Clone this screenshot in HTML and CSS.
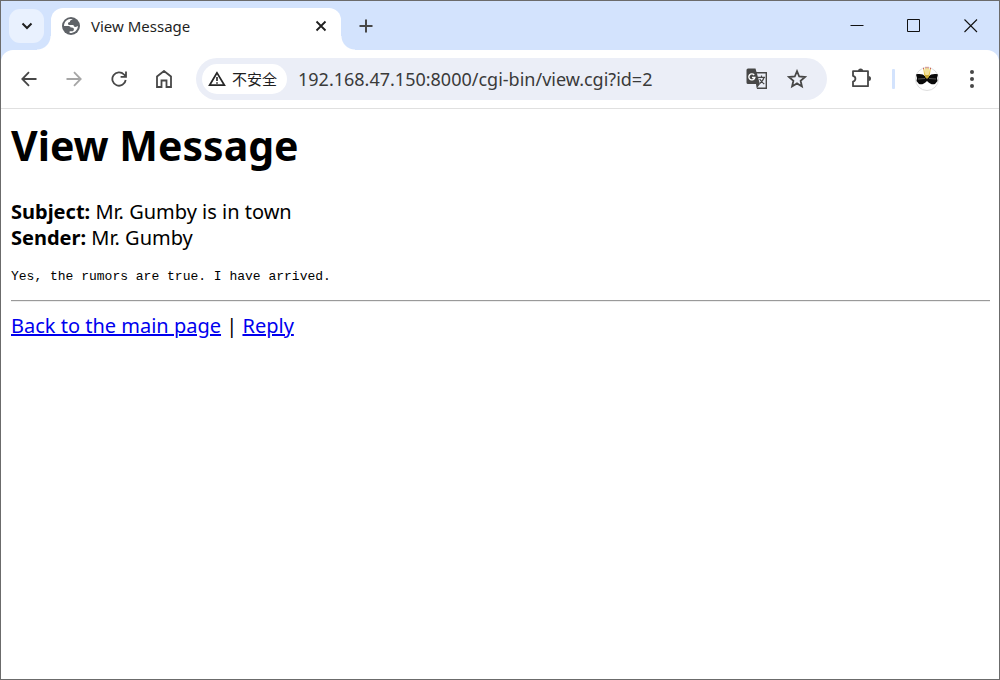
FILE: index.html
```html
<!DOCTYPE html>
<html lang="en">
<head>
<meta charset="utf-8">
<meta name="viewport" content="width=device-width, initial-scale=1">
<title>View Message</title>
<link rel="stylesheet" href="styles.css">
</head>
<body>
<div class="window">
  <header class="tab-strip">
    <button class="tab-search" aria-label="Search tabs">
      <svg width="12" height="8" viewBox="0 0 12 8"><path d="M1.500 1.500 6 6l4.500-4.500" fill="none" stroke="#1f1f1f" stroke-width="2"/></svg>
    </button>
    <div class="tab">
      <svg class="globe" width="18" height="18" viewBox="0 0 18 18"><circle cx="9" cy="9" r="9" fill="#5f6368"/><path d="M10.900 2.300C9 3.100 7.900 3.500 7.900 4.900 6.500 5 6 5.500 6 6.500s.7 1.500 1.800 1.500h3.700c0 1.300.8 1.900 2 1.900 1.100 0 1.900-.3 2.500-.8-.3 3.500-2.800 6.300-6.300 6.900-.7.100-1.400.1-2.100 0v-1.800h2.300c1.200 0 2-.7 2-1.800 0-1.200-.8-1.900-2-1.900H8.700c-.5-1-1.200-1.500-2.500-1.500H2c.1-3.700 2.500-6.400 6-7 1-.1 2 0 2.900.3z" fill="#fff"/></svg>
      <span class="tab-title">View Message</span>
      <button class="tab-close" aria-label="Close tab">
        <svg width="12" height="12" viewBox="0 0 12 12"><path d="m1.500 1.500 9 9m0-9-9 9" stroke="#1f1f1f" stroke-width="1.800"/></svg>
      </button>
    </div>
    <button class="new-tab" aria-label="New tab">
      <svg width="14" height="14" viewBox="0 0 14 14"><path d="M7 .5v13M.5 7h13" stroke="#474747" stroke-width="2"/></svg>
    </button>
    <div class="window-controls">
      <button aria-label="Minimize"><svg width="14" height="14" viewBox="0 0 14 14"><path d="M.5 6.500h13" stroke="#111"/></svg></button>
      <button aria-label="Maximize"><svg width="14" height="14" viewBox="0 0 14 14"><path d="M.5.500h12v12H.5z" fill="none" stroke="#111"/></svg></button>
      <button aria-label="Close"><svg width="14" height="14" viewBox="0 0 14 14"><path d="m.5.500 12.500 12.500m0-12.500L.5 13" stroke="#111" stroke-width="1.100"/></svg></button>
    </div>
  </header>

  <nav class="toolbar" aria-label="Browser">
    <div class="nav-buttons">
      <button aria-label="Back"><svg width="16" height="16" viewBox="0 0 16 16"><path d="M15.500 8H2M8 1.200 1.300 8 8 14.800" fill="none" stroke="#474747" stroke-width="1.800"/></svg></button>
      <button aria-label="Forward" disabled><svg width="16" height="16" viewBox="0 0 16 16"><path d="M.5 8H14M8 1.200 14.700 8 8 14.800" fill="none" stroke="#a6a6a6" stroke-width="1.800"/></svg></button>
      <button aria-label="Reload"><svg width="16" height="16" viewBox="0 0 16 16"><path d="M14.700 9A6.700 6.700 0 1 1 13 3.500l1.500 1.700M15 .5v5.400H9.600" fill="none" stroke="#474747" stroke-width="1.800"/></svg></button>
      <button aria-label="Home"><svg width="16" height="18" viewBox="0 0 16 18"><path d="M1 17V6.500L8 1l7 5.500V17h-4.500v-6.500h-5V17z" fill="none" stroke="#474747" stroke-width="1.800"/></svg></button>
    </div>
    <div class="address-bar">
      <button class="security" lang="zh-CN">
        <svg width="18" height="16" viewBox="0 0 18 16"><path d="M9 1.800 1.600 14.200h14.800z" fill="none" stroke="#262626" stroke-width="1.700"/><path d="M9 6v4m0 1.300v1.500" stroke="#262626" stroke-width="1.600"/></svg>
        <span>不安全</span>
      </button>
      <input class="address" type="text" aria-label="Address" value="192.168.47.150:8000/cgi-bin/view.cgi?id=2">
      <button class="address-action" aria-label="Translate this page">
        <svg width="22" height="22" viewBox="0 0 22 22"><path d="M9 4.700h11.300v15.600H11" fill="none" stroke="#474747" stroke-width="1.400"/><path d="M2 .5h7.500l4.400 15.500H2A1.500 1.500 0 0 1 .5 14.500V2A1.500 1.500 0 0 1 2 .5z" fill="#474747"/><path d="M10 16h4l-3.300 4.500z" fill="#474747"/><path d="M8.200 7A3 3 0 1 0 8.800 9.500H6" fill="none" stroke="#fff" stroke-width="1.400"/><path d="M12 9.400h7M15.500 7.500v2M18 9.500c-.7 2.500-2 4.200-4.200 6M13.700 11c1 2 2.500 3.500 4.600 5" fill="none" stroke="#474747" stroke-width="1.200"/></svg>
      </button>
      <button class="address-action" aria-label="Bookmark this page">
        <svg width="20" height="20" viewBox="0 0 20 20"><path d="m10 2.200 2.200 5.300 5.800.5-4.400 3.800 1.300 5.600-4.900-3-4.900 3 1.300-5.600L2 8l5.800-.5z" fill="none" stroke="#474747" stroke-width="1.800"/></svg>
      </button>
    </div>
    <div class="browser-actions">
      <button aria-label="Extensions"><svg width="22" height="22" viewBox="0 0 22 22"><path d="M3 3.200h15v15H3v-4.700c1.600-.4 2.400-1.400 2.400-2.800S4.600 8.300 3 7.900z" fill="none" stroke="#474747" stroke-width="1.800" stroke-linejoin="round"/><path d="M8 3a2.600 2.600 0 0 1 5.200 0zm10.500 5a2.500 2.500 0 0 1 0 5z" fill="#474747"/></svg></button>
      <span class="divider"></span>
      <button aria-label="Profile"><svg width="26" height="26" viewBox="0 0 26 26"><circle cx="13" cy="13" r="11.500" fill="#fff" stroke="#dedede"/><path d="M2 8.500c3.500-1 7.500-.3 9.500 2h3c2-2.300 6-3 9.500-2l-1 3.500.5 3-2.500 3c-2.500.8-5 .2-8-3-3 3.200-5.500 3.800-8 3l-2.500-3L3 12z" fill="#090909"/><path d="m4 13 7-.5m4 0 7 .5" stroke="#888" stroke-width=".6"/><path d="m9.800 3 1 6.500h4.400l1-6.500M12 2v8m2-8v8" fill="none" stroke="#e6c64c" stroke-width="1.100"/><path d="M11 9h4v2l-2 2-2-2z" fill="#c9aa37"/><path d="M9 2.500h1m1.500-1h1m1 0h1m1.500 1h1" stroke="#cc6658" stroke-width="1.500"/></svg></button>
      <button aria-label="Browser menu"><svg width="6" height="20" viewBox="0 0 6 20"><g fill="#474747"><circle cx="3" cy="3" r="2"/><circle cx="3" cy="10" r="2"/><circle cx="3" cy="17" r="2"/></g></svg></button>
    </div>
  </nav>

  <main class="page">
    <h1>View Message</h1>
    <p class="message-info"><b>Subject:</b> Mr. Gumby is in town<br><b>Sender:</b> Mr. Gumby</p>
    <pre>Yes, the rumors are true. I have arrived.</pre>
    <hr>
    <p class="page-links"><a href="#main">Back to the main page</a> | <a href="#reply">Reply</a></p>
  </main>
</div>
</body>
</html>
```
FILE: styles.css
```css
* { box-sizing: border-box; }
body { margin: 0; font-family: "Noto Sans", "Noto Sans CJK SC", sans-serif; color: #000; }
button { display: inline-flex; align-items: center; justify-content: center; flex: none; border: 0; padding: 0; background: transparent; font: inherit; }
svg { display: block; flex: none; }

.window { min-height: 100vh; border: 1px solid #6b6b6b; background: #d3e3fd; display: flex; flex-direction: column; }

.tab-strip { display: flex; align-items: center; height: 49px; padding-left: 8px; }
.tab-search { width: 35px; height: 34px; border-radius: 11px; background: #e9f1fe; }
.tab { position: relative; align-self: flex-end; display: flex; align-items: center; flex: 0 1 290px; height: 42px; margin-left: 7px; padding: 0 14px 6px 11px; border-radius: 12px 12px 0 0; background: #fff; }
.tab::before, .tab::after { content: ""; position: absolute; bottom: 0; width: 14px; height: 14px; }
.tab::before { right: 100%; background: radial-gradient(circle at 0 0, transparent 13px, #fff 14px); }
.tab::after { left: 100%; background: radial-gradient(circle at 100% 0, transparent 13px, #fff 14px); }
.tab-title { flex: 1; margin-left: 11px; font-size: 15px; line-height: 20px; color: #1f1f1f; white-space: nowrap; }
.new-tab { width: 34px; height: 34px; margin-left: 8px; }
.window-controls { display: flex; margin-left: auto; }
.window-controls button { width: 57px; height: 48px; }

.toolbar { display: flex; align-items: center; height: 59px; padding: 0 7px 0 5px; border-bottom: 1px solid #e0e0e0; border-radius: 12px 12px 0 0; background: #fff; }
.nav-buttons { display: flex; }
.nav-buttons button { width: 45px; height: 42px; }
.address-bar { display: flex; align-items: center; flex: 1; min-width: 0; height: 42px; margin-left: 10px; padding: 0 10px 0 6px; border-radius: 21px; background: #ebeef7; }
.security { gap: 6px; height: 30px; padding: 0 10px 0 6px; border-radius: 15px; background: #fff; font-size: 15px; line-height: 20px; color: #1f1f1f; }
.address { flex: 1; min-width: 0; height: 32px; margin-left: 11px; padding: 0; border: 0; outline: 0; background: transparent; color: #3a3a3a; font-family: "Noto Sans", sans-serif; font-size: 18px; }
.address-action { width: 40px; height: 40px; }
.browser-actions { display: flex; align-items: center; margin-left: 14px; }
.browser-actions button { width: 40px; height: 40px; }
.divider { width: 3px; height: 20px; margin: 0 12px 0 11px; border-radius: 1px; background: #d3e3fd; }
.browser-actions button:last-child { margin-left: 5px; }

.page { flex: 1; padding: 5px 9px 10px 10px; background: #fff; font-size: 20px; line-height: 26px; }
h1 { margin: 0 0 22px; font-size: 41px; line-height: 63px; }
.message-info { margin: 0; }
pre { margin: 17px 0 14px; font-family: "Liberation Mono", monospace; font-size: 13px; line-height: 18px; }
hr { margin: 0 0 11px; border: 0; border-top: 1px solid #9a9a9a; border-bottom: 1px solid #eee; }
.page-links { margin: 0; }
.page-links a { color: #00e; text-decoration: underline; }
```
